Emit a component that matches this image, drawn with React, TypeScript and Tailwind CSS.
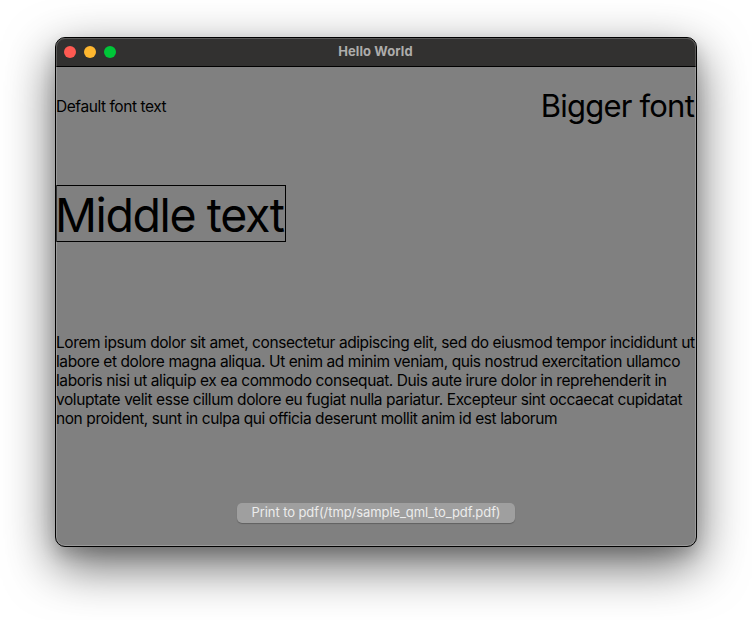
const lines = [
  'Lorem ipsum dolor sit amet, consectetur adipiscing elit, sed do eiusmod tempor incididunt ut',
  'labore et dolore magna aliqua. Ut enim ad minim veniam, quis nostrud exercitation ullamco',
  'laboris nisi ut aliquip ex ea commodo consequat. Duis aute irure dolor in reprehenderit in',
  'voluptate velit esse cillum dolore eu fugiat nulla pariatur. Excepteur sint occaecat cupidatat',
  'non proident, sunt in culpa qui officia deserunt mollit anim id est laborum',
];

export default function App() {
  return (
    <div className="h-[620px] w-[752px] overflow-hidden bg-white px-[55px] pt-[37px] font-['Inter',sans-serif] text-black">
      <div className="relative flex h-[510px] w-[642px] flex-col overflow-hidden rounded-[10px] border border-black bg-[#808080] shadow-[0_18px_50px_rgba(0,0,0,0.62),0_8px_16px_rgba(0,0,0,0.14)]">
        <header className="grid h-[29px] shrink-0 grid-cols-3 items-center border-b border-black bg-[#323130]">
          <div className="flex gap-2 pl-2">
            <span className="size-3 rounded-full bg-[#ff5a52]" />
            <span className="size-3 rounded-full bg-[#ffb72f]" />
            <span className="size-3 rounded-full bg-[#00c638]" />
          </div>
          <h1 className="pr-px pb-[2px] text-center text-[13px] font-bold leading-4 tracking-[0.08px] text-[#adacab]">Hello World</h1>
        </header>
        <main className="flex grow flex-col">
          <div className="flex h-[78px] items-center justify-between whitespace-nowrap">
            <p className="pt-0.5 text-[15.5px] tracking-[-0.44px]">Default font text</p>
            <p className="pr-[2px] pt-px text-[31px] tracking-[-0.78px]">Bigger font</p>
          </div>
          <div className="mt-[40px] h-[57px] w-[230px] whitespace-nowrap border border-black text-[46.5px] leading-[59px] tracking-[-1.4px]">
            <span className="-ml-0.5">Middle text</span>
          </div>
          <div className="mt-[91px] text-[15.5px] leading-[19px] tracking-[-0.415px]">
            {lines.map((line) => (
              <p key={line} className="whitespace-nowrap">{line}</p>
            ))}
          </div>
          <button className="mx-auto mt-[75px] h-[20px] w-[278px] rounded-[5px] bg-[#9f9f9f] pb-[2px] text-[13px] leading-[18px] tracking-[-0.08px] text-[#ececec] shadow-[0_1px_1px_rgba(0,0,0,0.25)]">
            Print to pdf(/tmp/sample_qml_to_pdf.pdf)
          </button>
        </main>
        <div className="pointer-events-none absolute inset-0 rounded-[9px] border border-white/20" />
      </div>
    </div>
  );
}
